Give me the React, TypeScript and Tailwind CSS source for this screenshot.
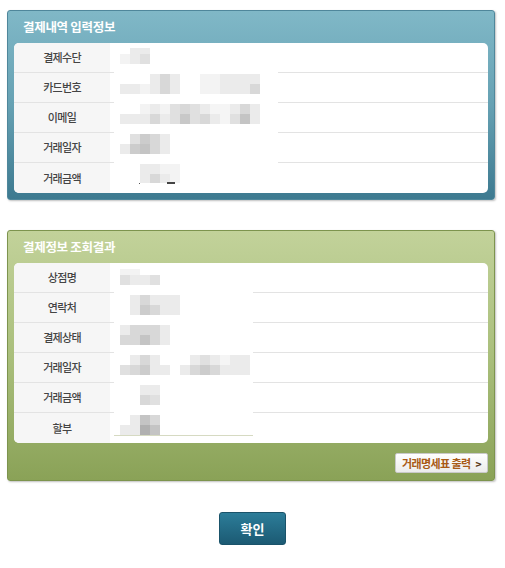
import React from 'react';

type Cell = [number, number, number, number, string];

type Row = { label: string; cells: Cell[] };

const A = '#f3f3f3';
const B = '#ebebeb';
const C = '#e0e0e0';
const D = '#d8d8d8';
const E = '#cccccc';
const F = '#c4c4c4';
const G = '#b0b0b0';

// x is measured from the left edge of the value column (page x 110), y from the row top
const inputRows: Row[] = [
  {
    label: '결제수단',
    cells: [
      [20, 5, 20, 6, B],
      [10, 11, 10, 10, A], [20, 11, 10, 10, B], [30, 11, 10, 10, C],
    ],
  },
  {
    label: '카드번호',
    cells: [
      [40, 1, 10, 10, B], [50, 1, 10, 10, D], [60, 1, 10, 10, B],
      [90, 1, 20, 10, A], [110, 1, 40, 10, B],
      [10, 11, 20, 10, B], [30, 11, 10, 10, A], [40, 11, 10, 10, B], [50, 11, 10, 10, D], [60, 11, 10, 10, B],
      [90, 11, 20, 10, A], [110, 11, 30, 10, B], [140, 11, 10, 10, D],
    ],
  },
  {
    label: '이메일',
    cells: [
      [30, 1, 10, 10, A], [40, 1, 10, 10, B], [50, 1, 10, 10, A], [60, 1, 10, 10, C], [70, 1, 10, 10, D],
      [80, 1, 10, 10, C], [90, 1, 10, 10, B], [100, 1, 20, 10, '#f5f5f5'], [120, 1, 10, 10, B],
      [130, 1, 10, 10, D], [140, 1, 10, 10, B],
      [10, 11, 30, 10, B], [40, 11, 10, 10, D], [50, 11, 10, 10, B], [60, 11, 10, 10, C], [70, 11, 10, 10, '#c8c8c8'],
      [80, 11, 10, 10, C], [90, 11, 10, 10, D], [100, 11, 10, 10, B], [110, 11, 10, 10, '#f5f5f5'],
      [120, 11, 10, 10, C], [130, 11, 10, 10, F], [140, 11, 10, 10, B],
    ],
  },
  {
    label: '거래일자',
    cells: [
      [20, 1, 10, 10, C], [30, 1, 10, 10, E], [40, 1, 10, 10, D], [50, 1, 10, 10, B],
      [10, 11, 10, 10, B], [20, 11, 10, 10, E], [30, 11, 10, 10, F], [40, 11, 10, 10, D], [50, 11, 10, 10, B],
    ],
  },
  {
    label: '거래금액',
    cells: [
      [30, 1, 20, 10, B], [50, 1, 20, 10, A],
      [30, 11, 10, 9, B], [40, 11, 10, 9, D], [50, 11, 10, 9, B], [60, 11, 10, 9, A],
      [29, 20, 1, 1, '#555555'], [57, 19, 8, 2, '#444444'],
    ],
  },
];

const resultRows: Row[] = [
  {
    label: '상점명',
    cells: [
      [10, 6, 20, 6, A],
      [10, 12, 10, 10, C], [20, 12, 20, 10, B], [40, 12, 10, 10, C],
    ],
  },
  {
    label: '연락처',
    cells: [
      [20, 2, 10, 10, B], [30, 2, 10, 10, D], [40, 2, 30, 10, B],
      [20, 12, 10, 10, B], [30, 12, 10, 10, E], [40, 12, 10, 10, D], [50, 12, 20, 10, B],
    ],
  },
  {
    label: '결제상태',
    cells: [
      [10, 2, 10, 10, B], [20, 2, 30, 10, D], [50, 2, 10, 10, B],
      [10, 12, 20, 10, D], [30, 12, 10, 10, F], [40, 12, 10, 10, D], [50, 12, 10, 10, B],
    ],
  },
  {
    label: '거래일자',
    cells: [
      [20, 2, 10, 10, B], [30, 2, 10, 10, D], [40, 2, 10, 10, B],
      [80, 2, 10, 10, B], [90, 2, 10, 10, C], [100, 2, 10, 10, B], [110, 2, 10, 10, '#f5f5f5'], [120, 2, 20, 10, B],
      [10, 12, 10, 10, C], [20, 12, 10, 10, D], [30, 12, 10, 10, E], [40, 12, 20, 10, B],
      [70, 12, 10, 10, B], [80, 12, 10, 10, D], [90, 12, 10, 10, E], [100, 12, 10, 10, D], [110, 12, 30, 10, B],
    ],
  },
  {
    label: '거래금액',
    cells: [
      [30, 2, 20, 10, B],
      [30, 12, 10, 10, D], [40, 12, 10, 10, C],
    ],
  },
  {
    label: '할부',
    cells: [
      [20, 2, 10, 10, B], [30, 2, 10, 10, F], [40, 2, 10, 10, D],
      [10, 12, 20, 10, B], [30, 12, 10, 10, G], [40, 12, 10, 10, F],
      [4, 22, 139, 1, '#d6dac2'],
    ],
  },
];

function InfoRow({ row, last, maskWidth }: { row: Row; last: boolean; maskWidth: number }) {
  const line = last ? '' : 'border-b border-[#e3e3e3]';
  return (
    <div className="flex h-[30px]">
      <div className={`w-[100px] shrink-0 h-full ${line}`}>
        <div className="w-[96px] h-full bg-[#f6f6f6] flex items-center justify-center text-[11px] font-medium tracking-[-0.7px] text-[#444]">
          {row.label}
        </div>
      </div>
      <div className="shrink-0 h-full relative -ml-[4px]" style={{ width: maskWidth + 4 }}>
        <svg width={maskWidth + 4} height={30} className="block">
          {row.cells.map(([x, y, w, h, c], i) => (
            <rect key={i} x={x} y={y} width={w} height={h} fill={c} />
          ))}
        </svg>
      </div>
      <div className={`flex-1 h-full ${line}`} />
    </div>
  );
}

function Panel({
  title,
  rows,
  maskWidth,
  tone,
  footer,
}: {
  title: string;
  rows: Row[];
  maskWidth: number;
  tone: 'blue' | 'green';
  footer?: React.ReactNode;
}) {
  const skin =
    tone === 'blue'
      ? 'bg-gradient-to-b from-[#80b8c7] via-[#66a1b3] to-[#3d7a90] border-[#4f879b]'
      : 'bg-gradient-to-b from-[#c2d29a] via-[#aabf7c] to-[#8aa257] border-[#7d944e]';
  return (
    <div className={`w-[488px] rounded-[3px] border ${skin} shadow-[1px_1px_2px_rgba(0,0,0,0.25)] px-[6px] pb-[6px]`}>
      <div className="h-[32px] flex items-center pl-[9px] text-white text-[12.5px] font-bold tracking-[-0.3px]">
        {title}
      </div>
      <div className="bg-white rounded-[5px] overflow-hidden">
        {rows.map((r, i) => (
          <InfoRow key={r.label + i} row={r} last={i === rows.length - 1} maskWidth={maskWidth} />
        ))}
      </div>
      {footer}
    </div>
  );
}

export default function App() {
  return (
    <div
      className="w-[505px] h-[568px] bg-white pt-[10px] pl-[7px]"
      style={{ fontFamily: '"Noto Sans CJK KR", "Noto Sans", sans-serif' }}
    >
      <Panel title="결제내역 입력정보" rows={inputRows} maskWidth={164} tone="blue" />

      <div className="mt-[30px]">
        <Panel
          title="결제정보 조회결과"
          rows={resultRows}
          maskWidth={139}
          tone="green"
          footer={
            <div className="flex justify-end pt-[10px] pb-[1px]">
              <button className="h-[20px] px-[6px] flex items-center gap-[5px] bg-gradient-to-b from-white to-[#ececec] border border-[#c9c9c9] rounded-[2px] text-[11px] font-bold tracking-[-0.6px] text-[#a85a16]">
                거래명세표 출력
                <span className="text-[10px] font-black text-[#5a3a1a]">&gt;</span>
              </button>
            </div>
          }
        />
      </div>

      <div className="flex justify-center mt-[31px] pr-[7px]">
        <button className="w-[67px] h-[33px] rounded-[3px] bg-gradient-to-b from-[#2c7d99] to-[#1c5a73] border border-[#1a536a] text-white text-[13px] font-bold">
          확인
        </button>
      </div>
    </div>
  );
}
